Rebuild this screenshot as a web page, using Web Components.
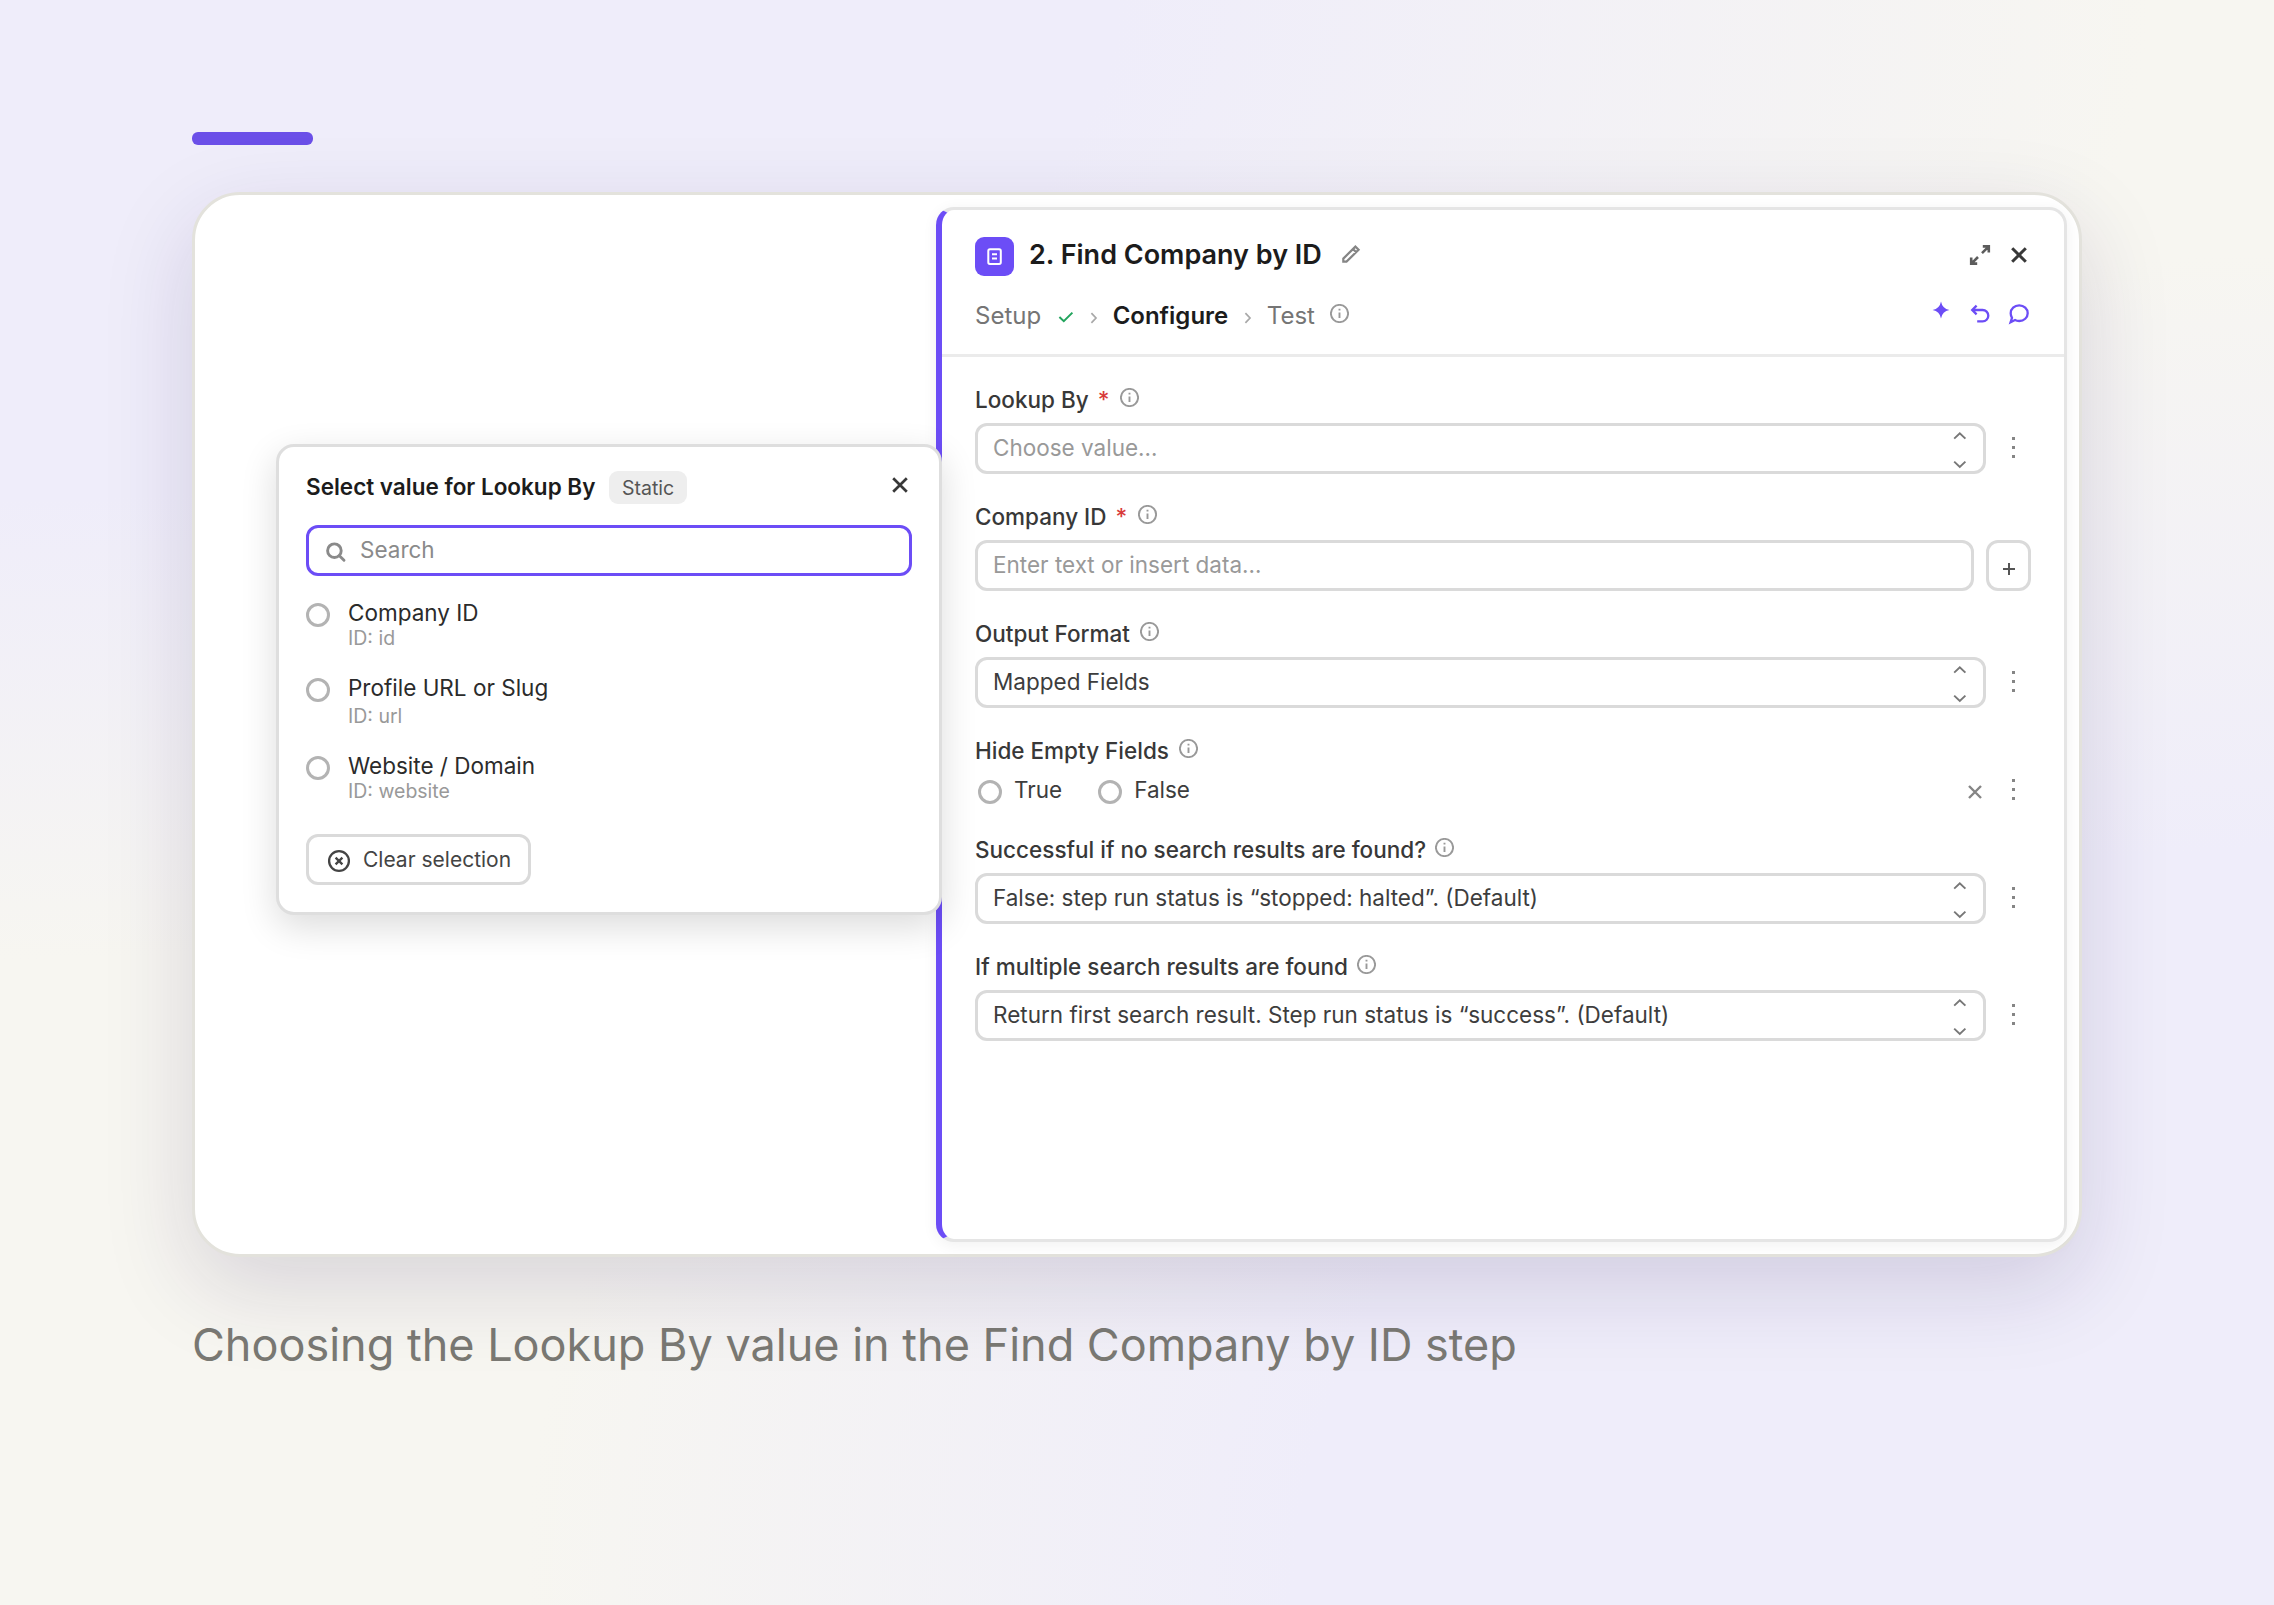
<!DOCTYPE html>
<html lang="en">
<head>
<meta charset="utf-8">
<title>Find Company by ID</title>
<style>
  html,
  body {
    margin: 0;
    height: 100%;
  }
  body {
    font-family: Inter, "Liberation Sans", sans-serif;
    font-size: 22.5px;
    color: #383838;
    --accent: #6c4df6;
    --line: #dadada;
  }
</style>
</head>
<body>
<doc-figure>
  <app-window>
    <step-panel heading="2. Find Company by ID">
      <form-field label="Lookup By" required>
        <select-box placeholder>Choose value…</select-box>
        <ui-icon name="menu"></ui-icon>
      </form-field>
      <form-field label="Company ID" required>
        <text-box>Enter text or insert data…</text-box>
        <add-button></add-button>
      </form-field>
      <form-field label="Output Format">
        <select-box>Mapped Fields</select-box>
        <ui-icon name="menu"></ui-icon>
      </form-field>
      <form-field label="Hide Empty Fields">
        <radio-row></radio-row>
      </form-field>
      <form-field label="Successful if no search results are found?" tight>
        <select-box>False: step run status is “stopped: halted”. (Default)</select-box>
        <ui-icon name="menu"></ui-icon>
      </form-field>
      <form-field label="If multiple search results are found" tight>
        <select-box>Return first search result. Step run status is “success”. (Default)</select-box>
        <ui-icon name="menu"></ui-icon>
      </form-field>
    </step-panel>
    <value-popover slot="popover" heading="Select value for Lookup By" tag="Static">
      <option-item hint="ID: id">Company ID</option-item>
      <option-item hint="ID: url" class="loose">Profile URL or Slug</option-item>
      <option-item hint="ID: website">Website / Domain</option-item>
    </value-popover>
  </app-window>
  <span slot="caption">Choosing the Lookup By value in the Find Company by ID step</span>
</doc-figure>

<script>
// name: [width, height, svg body]
const ICONS = {
  step: [39, 39, `<rect x="13.3" y="12.3" width="12.5" height="14.6" rx="1.6"/><path d="M17 17.3h5M17 21.6h5"/>`],
  pencil: [24, 24, `<path d="M4.3 16.6L16.4 4.6L19.6 7.8L7.5 19.6H4.3ZM14 7L17.2 10.2"/>`],
  expand: [24, 24, `<path d="M14 10.2L20.6 3.6M14.8 3.4H20.8V9.4M10 14L3.4 20.6M3.2 14.6V20.6H9.2"/>`],
  close: [24, 24, `<path d="M5.2 5.2L18.8 18.8M18.8 5.2L5.2 18.8"/>`],
  remove: [18, 18, `<path d="M3 3L15 15M15 3L3 15"/>`],
  check: [16, 12, `<path d="M1.4 6L5.8 10.2L14.4 1.6"/>`],
  crumb: [8, 12, `<path d="M1.4 1.2L6 6L1.4 10.8"/>`],
  info: [19, 19, `<circle cx="9.5" cy="9.5" r="8.6"/><path d="M9.5 8.4V14M9.5 4.7V6.6"/>`],
  sparkle: [24, 24, `<path stroke="none" fill="currentColor" d="M12 3.6Q13.3 10.7 20.4 12Q13.3 13.3 12 20.4Q10.7 13.3 3.6 12Q10.7 10.7 12 3.6Z"/>`],
  undo: [24, 24, `<path d="M8.6 3.6L4.2 8L8.6 12.4M4.2 8H14.6A5.6 5.6 0 0 1 14.6 19.4H9.2"/>`],
  chat: [24, 24, `<path d="M12.2 3.4C17 3.4 20.7 6.8 20.7 11.2S17 19 12.2 19C10.6 19 9.2 18.7 8 18L3.6 20.2L5 15.8C4.2 14.5 3.7 12.9 3.7 11.2C3.7 6.8 7.4 3.4 12.2 3.4Z"/>`],
  search: [24, 24, `<circle cx="10.4" cy="10.7" r="6.8"/><path stroke-linecap="round" d="M15.4 15.8L20 20.3"/>`],
  clear: [24, 24, `<circle cx="12" cy="12" r="9.9"/><path d="M8.6 8.6L15.4 15.4M15.4 8.6L8.6 15.4"/>`],
  plus: [18, 18, `<path d="M9 3V15M3 9H15"/>`],
  updown: [18, 45, `<path d="M3.2 12.6L8.8 7.2L14.4 12.6M3.2 35.6L8.8 41L14.4 35.6"/>`],
  menu: [33, 51, `<path stroke="none" fill="currentColor" d="M14 14h3v3h-3zM14 23h3v3h-3zM14 32h3v3h-3z"/>`],
};

class UiIcon extends HTMLElement {
  constructor() {
    super();
    this.attachShadow({ mode: "open" });
  }
  connectedCallback() {
    const name = this.getAttribute("name");
    const [w, h, body] = ICONS[name];
    this.shadowRoot.innerHTML = `
      <style>
        :host { display: block; flex: none; width: ${w}px; height: ${h}px; }
        :host([name="menu"]) { color: #858585; margin-left: 12px; }
        :host([name="info"]) { color: #999999; }
        svg { display: block; }
      </style>
      <svg width="${w}" height="${h}" viewBox="0 0 ${w} ${h}" fill="none" stroke="currentColor"
        stroke-width="${this.getAttribute("weight") || 2}">${body}</svg>`;
  }
}
customElements.define("ui-icon", UiIcon);

// Base for elements whose markup depends only on their attributes.
class BaseElement extends HTMLElement {
  connectedCallback() {
    if (this.shadowRoot) return;
    const template = document.createElement("template");
    template.innerHTML = this.render();
    this.attachShadow({ mode: "open" }).appendChild(template.content.cloneNode(true));
  }
}

class DocFigure extends BaseElement {
  render() {
    return `
      <style>
        :host {
          display: flex;
          flex-direction: column;
          align-items: flex-start;
          box-sizing: border-box;
          width: 2274px;
          height: 1605px;
          padding: 132px 192px 0;
          overflow: hidden;
          background:
            radial-gradient(2150px 960px at 0 0, #efedfa 52%, rgba(239, 237, 250, 0) 100%),
            radial-gradient(1750px 1350px at 100% 100%, #efedfa 56%, rgba(239, 237, 250, 0) 100%),
            #f7f6f1;
        }
        .bar {
          width: 121px;
          height: 13px;
          margin-bottom: 47px;
          border-radius: 6px;
          background: #6b4fe8;
        }
        .caption {
          margin-top: 60px;
          font-size: 45px;
          line-height: 55px;
          color: #7a7973;
          white-space: nowrap;
        }
      </style>
      <div class="bar"></div>
      <slot></slot>
      <div class="caption"><slot name="caption"></slot></div>`;
  }
}
customElements.define("doc-figure", DocFigure);

class AppWindow extends BaseElement {
  render() {
    return `
      <style>
        :host {
          position: relative;
          display: flex;
          justify-content: flex-end;
          box-sizing: border-box;
          width: 1890px;
          height: 1065px;
          padding: 12px;
          border: 3px solid #e3e2dc;
          border-radius: 48px;
          background: #ffffff;
          box-shadow: 0 30px 90px rgba(38, 22, 80, 0.15);
        }
        /* floats over the left edge of the panel */
        .popover {
          position: absolute;
          left: 81px;
          top: 249px;
        }
      </style>
      <slot></slot>
      <div class="popover"><slot name="popover"></slot></div>`;
  }
}
customElements.define("app-window", AppWindow);

class StepPanel extends BaseElement {
  render() {
    return `
      <style>
        :host {
          display: flex;
          flex-direction: column;
          box-sizing: border-box;
          width: 1131px;
          border: 3px solid #e5e5e5;
          border-left: 6px solid var(--accent);
          border-radius: 18px;
          background: #ffffff;
          box-shadow: 0 3px 15px rgba(0, 0, 0, 0.06);
        }
        header {
          display: flex;
          flex-direction: column;
          gap: 21px;
          padding: 27px 33px 21px;
          border-bottom: 3px solid #ebebeb;
        }
        .row {
          display: flex;
          align-items: flex-start;
          white-space: nowrap;
        }
        .title { height: 39px; }
        h1 {
          margin: 0 17px 0 15px;
          font-size: 27px;
          line-height: 35px;
          font-weight: 600;
          color: #1c1c1c;
        }
        .badge {
          border-radius: 9px;
          background: var(--accent);
          color: #ffffff;
        }
        .steps {
          height: 36px;
          font-size: 24px;
          line-height: 37px;
          color: #757575;
        }
        .steps b { font-weight: 600; color: #1c1c1c; }
        .tools {
          display: flex;
          align-items: flex-start;
          gap: 15px;
          margin-left: auto;
        }
        .title .tools { padding-top: 6px; }
        .steps .tools { padding-top: 5px; color: var(--accent); }
        .pencil { margin-top: 5px; color: #858585; }
        .check { margin: 14px 16px 0 17px; color: #22a45d; }
        .crumb { margin: 15px 14.5px 0 0; color: #a8a8a8; }
        .crumb + b { margin-right: 16px; }
        .info { margin: 7px 0 0 15px; }
        .sparkle { margin-top: -4px; }
        .body {
          display: flex;
          flex-direction: column;
          gap: 28px;
          padding: 28px 33px 0;
        }
      </style>
      <header>
        <div class="row title">
          <ui-icon class="badge" name="step"></ui-icon>
          <h1>${this.getAttribute("heading")}</h1>
          <ui-icon class="pencil" name="pencil" weight="2.2"></ui-icon>
          <div class="tools">
            <ui-icon name="expand" weight="2.6" style="color: #5c5c5c"></ui-icon>
            <ui-icon name="close" weight="3"></ui-icon>
          </div>
        </div>
        <div class="row steps">
          <span>Setup</span>
          <ui-icon class="check" name="check"></ui-icon>
          <ui-icon class="crumb" name="crumb" weight="1.7"></ui-icon>
          <b>Configure</b>
          <ui-icon class="crumb" name="crumb" weight="1.7"></ui-icon>
          <span>Test</span>
          <ui-icon class="info" name="info" weight="1.9"></ui-icon>
          <div class="tools">
            <ui-icon class="sparkle" name="sparkle"></ui-icon>
            <ui-icon name="undo" weight="2.3"></ui-icon>
            <ui-icon name="chat" weight="2.3"></ui-icon>
          </div>
        </div>
      </header>
      <div class="body"><slot></slot></div>`;
  }
}
customElements.define("step-panel", StepPanel);

class FormField extends BaseElement {
  render() {
    const star = this.hasAttribute("required") ? `<span class="star">*</span>` : "";
    return `
      <style>
        :host {
          display: flex;
          flex-direction: column;
          gap: 8px;
        }
        .label {
          display: flex;
          align-items: flex-start;
          height: 30px;
          line-height: 29px;
          font-weight: 500;
          white-space: nowrap;
        }
        .star { margin-left: 9px; color: #d83a3a; }
        .label ui-icon { margin: 3px 0 0 10.5px; }
        :host([tight]) .label ui-icon { margin-left: 9px; }
        .control { display: flex; }
      </style>
      <div class="label"><span>${this.getAttribute("label")}</span>${star}<ui-icon name="info" weight="1.9"></ui-icon></div>
      <div class="control"><slot></slot></div>`;
  }
}
customElements.define("form-field", FormField);

const BOX_STYLE = `
  :host {
    display: flex;
    flex: 1;
    justify-content: space-between;
    box-sizing: border-box;
    height: 51px;
    padding: 0 14px 0 15px;
    border: 3px solid var(--line);
    border-radius: 12px;
    background: #ffffff;
    line-height: 43px;
    white-space: nowrap;
    color: #3d3d3d;
  }`;

class SelectBox extends BaseElement {
  render() {
    return `
      <style>
        ${BOX_STYLE}
        :host([placeholder]) { color: #999999; }
        ui-icon { color: #777777; }
      </style>
      <span><slot></slot></span>
      <ui-icon name="updown" weight="1.9"></ui-icon>`;
  }
}
customElements.define("select-box", SelectBox);

class TextBox extends BaseElement {
  render() {
    return `
      <style>
        ${BOX_STYLE}
        :host { color: #999999; }
      </style>
      <span><slot></slot></span>`;
  }
}
customElements.define("text-box", TextBox);

class AddButton extends BaseElement {
  render() {
    return `
      <style>
        :host {
          display: flex;
          justify-content: center;
          box-sizing: border-box;
          width: 45px;
          height: 51px;
          margin-left: 12px;
          padding-top: 17px;
          border: 3px solid var(--line);
          border-radius: 12px;
          color: #555555;
        }
      </style>
      <ui-icon name="plus"></ui-icon>`;
  }
}
customElements.define("add-button", AddButton);

const RADIO_STYLE = `
  .radio {
    flex: none;
    box-sizing: border-box;
    width: 24px;
    height: 24px;
    border: 3px solid #b3b3b3;
    border-radius: 50%;
    background: #ffffff;
  }`;

class RadioRow extends BaseElement {
  render() {
    return `
      <style>
        :host {
          display: flex;
          flex: 1;
          align-items: flex-start;
          height: 33px;
          padding-left: 3px;
          line-height: 31px;
          color: #3d3d3d;
        }
        ${RADIO_STYLE}
        .radio { margin: 6px 12px 0 0; }
        span { margin-right: 36px; }
        .remove { margin: 9px 2px 0 auto; color: #858585; }
        .menu { margin-top: -9px; }
      </style>
      <div class="radio"></div><span>True</span>
      <div class="radio"></div><span>False</span>
      <ui-icon class="remove" name="remove" weight="2.4"></ui-icon>
      <ui-icon class="menu" name="menu"></ui-icon>`;
  }
}
customElements.define("radio-row", RadioRow);

class ValuePopover extends BaseElement {
  render() {
    return `
      <style>
        :host {
          display: flex;
          flex-direction: column;
          align-items: flex-start;
          box-sizing: border-box;
          width: 666px;
          height: 471px;
          padding: 24px 27px 27px;
          border: 3px solid #dedede;
          border-radius: 18px;
          background: #ffffff;
          box-shadow: 0 12px 36px rgba(0, 0, 0, 0.14);
          white-space: nowrap;
        }
        .head {
          display: flex;
          align-items: flex-start;
          align-self: stretch;
          height: 33px;
          margin-bottom: 21px;
        }
        h2 {
          margin: 0 13.6px 0 0;
          font-size: 22.5px;
          line-height: 31px;
          font-weight: 600;
          color: #1c1c1c;
        }
        .tag {
          height: 33px;
          padding: 0 13px;
          border-radius: 9px;
          background: #eeeeee;
          font-size: 19.5px;
          line-height: 34px;
          color: #555555;
        }
        .head ui-icon { margin: 2px 0.5px 0 auto; }
        .search {
          display: flex;
          align-self: stretch;
          gap: 12px;
          height: 45px;
          margin-bottom: 23px;
          padding-left: 15px;
          border: 3px solid var(--accent);
          border-radius: 12px;
          line-height: 43px;
          color: #8a8a8a;
        }
        .search ui-icon { margin-top: 12px; }
        .options {
          display: flex;
          flex-direction: column;
          gap: 24px;
          margin-bottom: 31px;
        }
        .clear {
          display: flex;
          gap: 12px;
          box-sizing: border-box;
          width: 225px;
          height: 51px;
          padding-left: 18px;
          border: 3px solid var(--line);
          border-radius: 12px;
          font-size: 21px;
          line-height: 45px;
          color: #444444;
        }
        .clear ui-icon { margin-top: 12px; }
      </style>
      <div class="head">
        <h2>${this.getAttribute("heading")}</h2>
        <div class="tag">${this.getAttribute("tag")}</div>
        <ui-icon name="close" weight="2.7"></ui-icon>
      </div>
      <div class="search"><ui-icon name="search" weight="2.9"></ui-icon><span>Search</span></div>
      <div class="options"><slot></slot></div>
      <div class="clear"><ui-icon name="clear" weight="2.3"></ui-icon><span>Clear selection</span></div>`;
  }
}
customElements.define("value-popover", ValuePopover);

class OptionItem extends BaseElement {
  render() {
    return `
      <style>
        :host {
          display: flex;
          gap: 18px;
          line-height: 27px;
          color: #2b2b2b;
        }
        ${RADIO_STYLE}
        .radio { margin-top: 4px; }
        .hint {
          font-size: 19.5px;
          line-height: 24px;
          color: #999999;
        }
        :host(.loose) .hint { margin-top: 3px; }
      </style>
      <div class="radio"></div>
      <div>
        <div><slot></slot></div>
        <div class="hint">${this.getAttribute("hint")}</div>
      </div>`;
  }
}
customElements.define("option-item", OptionItem);
</script>
</body>
</html>
